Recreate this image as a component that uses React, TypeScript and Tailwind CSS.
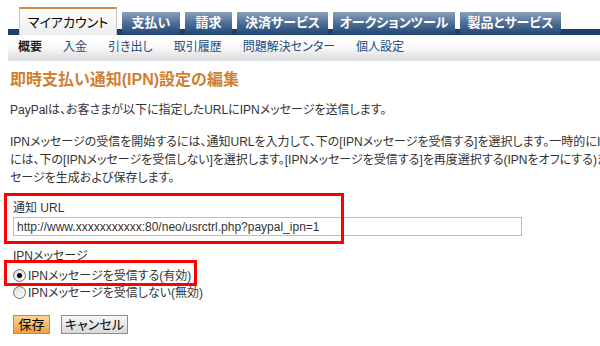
const tabs = [
  { label: "支払い", w: "w-[58px]" },
  { label: "請求", w: "w-[47px]" },
  { label: "決済サービス", w: "w-[91px]" },
  { label: "オークションツール", w: "w-[122px]" },
  { label: "製品とサービス", w: "w-[101px]" },
];

const subNav = ["入金", "引き出し", "取引履歴", "問題解決センター", "個人設定"];

function Radio({ checked }: { checked?: boolean }) {
  return (
    <span className="relative inline-flex h-[13px] w-[13px] shrink-0 items-center justify-center rounded-full border border-[#6f6f6f] bg-[linear-gradient(135deg,#d9d9d9,#ffffff)]">
      {checked && <span className="h-[5px] w-[5px] rounded-full bg-black" />}
    </span>
  );
}

export default function App() {
  return (
    <div className="relative h-[346px] w-[600px] overflow-hidden bg-white text-[12px] text-[#333] [font-family:'Liberation_Sans','Noto_Sans_CJK_JP',sans-serif] [font-feature-settings:'palt']">
      {/* Tab row with dark band */}
      <div className="ml-[8px] flex h-[35px] items-end gap-[5px] pl-[11px] bg-[linear-gradient(to_bottom,transparent_29px,#1c3f6c_29px)]">
        <div className="flex h-[28px] w-[98px] items-center justify-center border-x border-t-2 border-x-[#c4c4c4] border-t-[#d98a44] bg-gradient-to-b from-white to-[#ededed] pt-[2px] text-[13px] text-black">
          マイアカウント
        </div>
        {tabs.map((t) => (
          <div
            key={t.label}
            className={`${t.w} flex h-[23px] items-center justify-center bg-gradient-to-b from-[#8aa1be] via-[#4d6d96] to-[#1f4472] pb-[1px] text-[13px] font-bold text-white`}
          >
            {t.label}
          </div>
        ))}
      </div>

      {/* Sub navigation */}
      <div className="ml-[8px] flex h-[26px] items-center gap-[21px] border-b-2 border-[#d6e1ec] bg-gradient-to-b from-white via-[#fafafa] to-[#dedede] pl-[10px] text-[12px]">
        <span className="font-bold text-[#222]">概要</span>
        {subNav.map((s) => (
          <span key={s} className="text-[#234a7c]">
            {s}
          </span>
        ))}
      </div>

      {/* Content */}
      <div className="pl-[10px]">
        <h1 className="mt-[9px] h-[20px] text-[16px] font-bold leading-[20px] text-[#cf7f33]">
          即時支払い通知(IPN)設定の編集
        </h1>
        <p className="mt-[11px] leading-[18px]">
          PayPalは、お客さまが以下に指定したURLにIPNメッセージを送信します。
        </p>
        <p className="mt-[14px] whitespace-nowrap leading-[18px]">
          IPNメッセージの受信を開始するには、通知URLを入力して、下の[IPNメッセージを受信する]を選択します。一時的にIPNメッセージの受信を停止する
          <br />
          には、下の[IPNメッセージを受信しない]を選択します。[IPNメッセージを受信する]を再度選択する(IPNをオフにする)まで、PayPalはIPNメッ
          <br />
          セージを生成および保存します。
        </p>

        <div className="mt-[12px] pl-[3px]">
          <div className="leading-[18px]">通知 URL</div>
          <input
            readOnly
            value="http://www.xxxxxxxxxxx:80/neo/usrctrl.php?paypal_ipn=1"
            className="h-[19px] w-[509px] border border-[#a9c2d9] px-[3px] text-[12px] text-[#333] outline-none"
          />
          <div className="mt-[12px] leading-[16px]">IPNメッセージ</div>
          <div className="mt-[3px] flex h-[17px] items-center gap-[2px]">
            <Radio checked />
            <span>IPNメッセージを受信する(有効)</span>
          </div>
          <div className="flex h-[17px] items-center gap-[2px]">
            <Radio />
            <span>IPNメッセージを受信しない(無効)</span>
          </div>
          <div className="mt-[14px] flex gap-[11px]">
            <button className="h-[19px] w-[37px] border border-[#b98a4c] bg-gradient-to-b from-[#fcd594] to-[#ee9f3e] text-[13px] leading-[17px] text-black">
              保存
            </button>
            <button className="h-[19px] w-[67px] border border-[#8e8e8e] bg-gradient-to-b from-[#f7f7f7] to-[#d9d9d9] text-[13px] leading-[17px] text-black">
              キャンセル
            </button>
          </div>
        </div>
      </div>

      {/* Red annotation boxes */}
      <div className="absolute left-[4px] top-[193px] h-[51px] w-[340px] border-[3px] border-[#ff0000]" />
      <div className="absolute left-[4px] top-[260px] h-[26px] w-[193px] border-[3px] border-[#ff0000]" />
    </div>
  );
}
